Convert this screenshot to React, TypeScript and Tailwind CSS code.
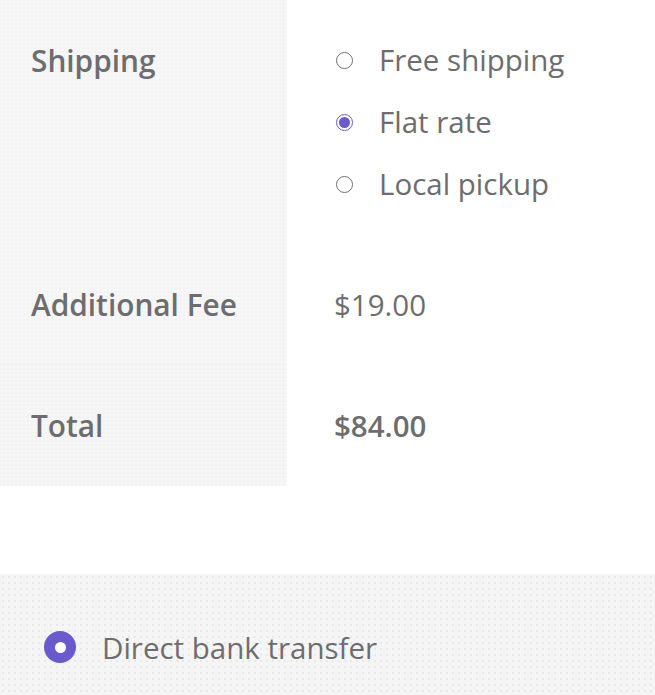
import React from "react"

const font = { fontFamily: "'Open Sans', 'Noto Sans', sans-serif" }

const Radio = ({ checked = false }: { checked?: boolean }) => (
  <span
    className={
      checked
        ? "flex h-[17px] w-[17px] items-center justify-center rounded-full border-[1.5px] border-[#6a5acd] bg-white"
        : "block h-[17px] w-[17px] rounded-full border-[1.5px] border-[#6f6f6f] bg-white"
    }
  >
    {checked && <span className="block h-[11px] w-[11px] rounded-full bg-[#6a5acd]" />}
  </span>
)

const options = [
  { label: "Free shipping", checked: false },
  { label: "Flat rate", checked: true },
  { label: "Local pickup", checked: false },
]

const labelCell =
  "w-[287px] shrink-0 bg-[#f4f4f4] bg-[radial-gradient(circle,#f9f9f9_0.7px,transparent_1px)] bg-[length:4px_4px] pl-[31px] text-[29.8px] font-semibold leading-[31px] "

const Row = ({ label, children }: { label: string; children: React.ReactNode }) => (
  <div className="flex">
    <div className={labelCell + "py-[45px]"}>{label}</div>
    <div className="flex-1 py-[45px] pl-[47px] text-[29.5px] leading-[31px]">{children}</div>
  </div>
)

export default function App() {
  return (
    <div className="w-[655px] bg-white text-[#6d6d6d]" style={font}>
      <div className="flex">
        <div className={labelCell + "pt-[45px]"}>Shipping</div>
        <ul className="flex-1 py-[29px] pl-[49px]">
          {options.map((o) => (
            <li key={o.label} className="flex h-[62px] items-center text-[29.5px]">
              <Radio checked={o.checked} />
              <span className="ml-[26px]">{o.label}</span>
            </li>
          ))}
        </ul>
      </div>
      <Row label="Additional Fee">$19.00</Row>
      <Row label="Total">
        <span className="font-semibold">$84.00</span>
      </Row>

      <div className="mt-[88px] h-[122px] bg-[#f5f5f5] bg-[radial-gradient(circle,#cdcdcd_0.5px,transparent_0.8px)] bg-[length:6px_6px] pl-[44px] pt-[57px]">
        <label className="flex items-center text-[29.5px] leading-[31px]">
          <span className="flex h-[32px] w-[32px] items-center justify-center rounded-full bg-[#6a5acd]">
            <span className="block h-[11px] w-[11px] rounded-full bg-white" />
          </span>
          <span className="ml-[26px]">Direct bank transfer</span>
        </label>
      </div>
    </div>
  )
}
